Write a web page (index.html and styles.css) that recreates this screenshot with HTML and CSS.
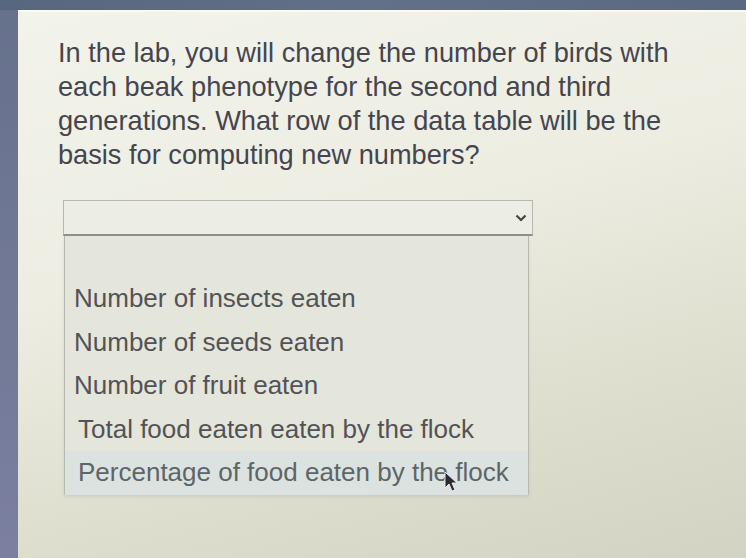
FILE: index.html
```html
<!DOCTYPE html>
<html>
<head>
<meta charset="utf-8">
<link rel="stylesheet" href="styles.css">
</head>
<body>
<div class="topbar"></div>
<div class="main">
  <div class="side"></div>
  <div class="panel">
    <p class="question">In the lab, you will change the number of birds with each beak phenotype for the second and third generations. What row of the data table will be the basis for computing new numbers?</p>
    <div class="select">
      <svg class="chev" width="12" height="8" viewBox="0 0 12 8"><path d="M1.5 1.5 L6 6 L10.5 1.5" fill="none" stroke="#444" stroke-width="2.2"/></svg>
    </div>
    <ul class="list">
      <li>Number of insects eaten</li>
      <li>Number of seeds eaten</li>
      <li>Number of fruit eaten</li>
      <li class="shift">Total food eaten eaten by the flock</li>
      <li class="shift hover">Percentage of food eaten by the flock
        <svg class="cursor" width="16" height="22" viewBox="0 0 16 22"><path d="M1 1 L1 17 L5 13 L8 20 L11 19 L8 12 L13 12 Z" fill="#2a2a30" stroke="#e8e8e8" stroke-width="1"/></svg>
      </li>
    </ul>
  </div>
</div>
</body>
</html>
```
FILE: styles.css
```css
html, body {
  margin: 0;
  padding: 0;
  height: 100%;
  background: #5d6a82;
}
body {
  display: flex;
  flex-direction: column;
  width: 746px;
  height: 558px;
  overflow: hidden;
  font-family: "Liberation Sans", Arial, sans-serif;
}
.topbar {
  height: 10px;
  background: linear-gradient(to right, #57677f, #62708a 50%, #5a6882);
  flex: none;
}
.main {
  flex: 1;
  display: flex;
}
.side {
  width: 18px;
  background: linear-gradient(to bottom, #66718c, #7b80a0);
  flex: none;
}
.panel {
  flex: 1;
  background: linear-gradient(165deg, #f2f3ea 0%, #ededE2 40%, #dcddcc 75%, #d2d3c2 100%);
  border-top: 2px solid #fafaf6;
  padding: 24px 0 0 40px;
  display: flex;
  flex-direction: column;
  align-items: flex-start;
}
.question {
  margin: 0;
  width: 630px;
  font-size: 27.2px;
  line-height: 34px;
  color: #45454f;
}
.select {
  margin-top: 28px;
  margin-left: 5px;
  width: 470px;
  height: 36px;
  border: 1px solid #b6b8ae;
  border-bottom: 2px solid #909088;
  background: #ecede4;
  display: flex;
  align-items: center;
  justify-content: flex-end;
  padding-right: 5px;
  box-sizing: border-box;
}
.chev {
  display: block;
}
.list {
  list-style: none;
  margin: 0 0 0 6px;
  padding: 41px 0 0 0;
  width: 465px;
  height: 259px;
  box-sizing: border-box;
  background: #e4e5db;
  border: 1px solid #b7b8b0;
  border-top: none;
  border-bottom: 2px solid #c6c8c0;
  box-shadow: 0 2px 3px rgba(0,0,0,0.08);
}
.list li {
  font-size: 26px;
  line-height: 43.5px;
  color: #535357;
  padding-left: 9px;
  height: 43.5px;
  position: relative;
  white-space: nowrap;
}
.list li.shift {
  padding-left: 13px;
}
.list li.hover {
  background: #dce2df;
  color: #5c6668;
}
.cursor {
  position: absolute;
  left: 379px;
  top: 20px;
}
```
